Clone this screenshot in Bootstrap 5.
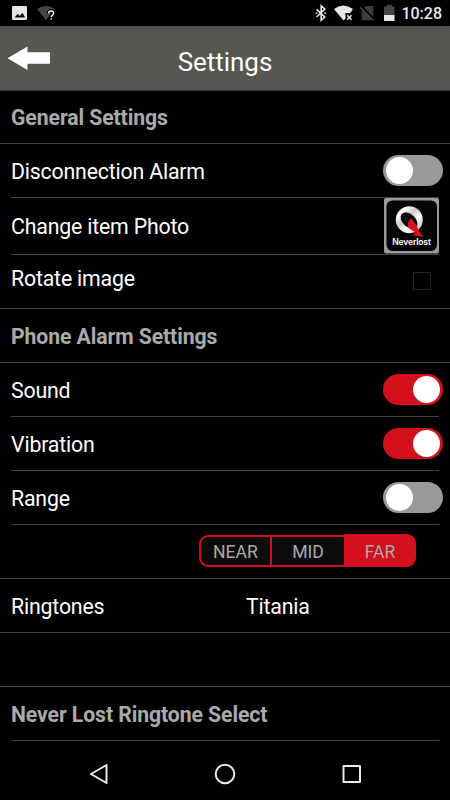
<!DOCTYPE html>
<html lang="en">
<head>
<meta charset="utf-8">
<meta name="viewport" content="width=device-width, initial-scale=1">
<title>Settings</title>
<link href="https://cdn.jsdelivr.net/npm/bootstrap@5.3.0/dist/css/bootstrap.min.css" rel="stylesheet">
<style>
body{font-family:Roboto,sans-serif;background:#000;color:#fff;width:450px;height:800px;overflow:hidden;font-size:21.3px;letter-spacing:-.18px;line-height:26px}
.status{height:26px;font-size:16px;letter-spacing:0;font-weight:500;color:#e8e8e8}
.clock{padding-top:2px}
.titlebar{height:64px;background:linear-gradient(#4c4b47,#575650 12%,#575650)}
.titlebar h1{font-size:26px;font-weight:400;letter-spacing:-.05px;line-height:30px;color:#fff;padding-top:8px}
.line-full{border-bottom:1px solid #444}
.top-line{border-top:1px solid #333}
.opt{height:54px;margin-left:11px;padding-top:2px}
.opt.inset{margin-right:11px;border-bottom:1px solid #444}
.opt.photo{height:57px}
.opt.short{height:53px}
.opt.first{height:52px}
.heading{color:#aaa;font-weight:700;font-size:21.2px;letter-spacing:-.08px}
.switch{width:60px;height:31px;border-radius:16px;background:#999;padding:2px 3px;margin:-2px -4px 0 0}
.switch i{display:block;width:27px;height:27px;border-radius:50%;background:#fff}
.switch.on{background:#d20f1c}
.range-row{height:53px;padding-bottom:2px}
.seg{width:217px;height:33px;margin-right:34px;font-size:17.6px;letter-spacing:0;color:#aaa}
.seg div{height:32px;background:#0c0c0c;border:2px solid #d20f1c;line-height:20px;padding-top:2px}
.seg .near{width:72px;border-radius:9px 0 0 9px;border-right-width:1px}
.seg .mid{width:73px;border-left-width:1px;border-right:0}
.seg .far{width:72px;height:33px;background:#d20f1c;border-radius:0 9px 9px 0}
.box{width:18px;height:18px;border:1px solid #242424;margin:-3px 11px 0 0}
.ring{width:235px}
.thumb{margin-top:-2px}
</style>
<script src="https://cdn.jsdelivr.net/npm/bootstrap@5.3.0/dist/js/bootstrap.bundle.min.js"></script>
</head>
<body>
<div class="status d-flex align-items-center justify-content-between">
  <svg width="70" height="26" viewBox="0 0 70 26">
    <rect x="12" y="6" width="15" height="14" rx="1.2" fill="#e8e8e8"/>
    <path d="M14.500 17.500l3.300-3.800 2 2.200 2.500-3.200 3 4.800z" fill="#111"/>
    <path d="M37 9q9-6 18 0l-9 11z" fill="#454545"/>
    <path d="M48.800 13.500q0-2.400 2.400-2.400t2.400 2.200q0 1.200-1.300 2-1.100.8-1.100 1.800M51.200 18v1.800" stroke="#000" stroke-width="4" fill="none"/>
    <path d="M48.800 13.500q0-2.400 2.400-2.400t2.400 2.200q0 1.200-1.300 2-1.100.8-1.100 1.800M51.200 18.200v1.600" stroke="#eee" stroke-width="1.500" fill="none"/>
  </svg>
  <div class="d-flex align-items-center">
  <svg width="90" height="26" viewBox="311 0 90 26">
    <path d="M316.600 9.300l8.200 7.700-3.600 3.200V5.800l3.600 3.200-8.200 8" stroke="#e8e8e8" stroke-width="1.600" fill="none"/>
    <path d="M315.800 13.200h1.600M324.500 13.200h1.600" stroke="#ddd" stroke-width="1.600"/>
    <path d="M334 9q9.300-7 19 0l-2.800 4h-4.700v5.500l-2 2z" fill="#e8e8e8"/>
    <path d="M347.200 15.200l4.300 4.600m0-4.600l-4.300 4.600" stroke="#e8e8e8" stroke-width="1.500"/>
    <path d="M366 6h6q1.300 0 1.300 1.300V19q0 1.200-1.300 1.200h-10.300V10.500z" fill="#3c3c3c"/>
    <path d="M361 6.500l14 14" stroke="#000" stroke-width="2.500"/>
    <path d="M360.200 7.500l13.300 13" stroke="#4a4a4a" stroke-width="1.200"/>
    <path d="M387 5h5v1.500h2.500V15h-10.500V6.500h3z" fill="#454545"/>
    <path d="M384 15h10.500v6H384z" fill="#e8e8e8"/>
  </svg>
  <span class="pe-2 clock">10:28</span>
  </div>
</div>
<header class="titlebar d-flex align-items-center justify-content-center position-relative">
  <svg class="position-absolute start-0 top-0" width="60" height="64" viewBox="0 26 60 64"><path d="M7.500 58.200L27.500 46.500v5.800H50v11.500H27.500V70z" fill="#fff"/></svg>
  <h1 class="mb-0">Settings</h1>
</header>
<main>
  <section class="line-full top-line"><div class="opt first heading d-flex align-items-center">General Settings</div></section>
  <section class="line-full">
    <div class="opt inset d-flex align-items-center justify-content-between">Disconnection Alarm<div class="switch"><i></i></div></div>
    <div class="opt inset photo d-flex align-items-center justify-content-between">Change item Photo
      <svg class="thumb" width="55" height="56" viewBox="0 0 55 56">
        <rect y="0" width="55" height="55.500" rx="2" fill="#999"/><rect x="2.500" y="2.500" width="50.500" height="50.500" rx="6" fill="#050505"/>
        <defs><linearGradient id="silver" x2="1" y2="1"><stop stop-color="#aaa"/><stop offset=".2" stop-color="#fff"/><stop offset=".42" stop-color="#ccc"/><stop offset=".62" stop-color="#fff"/><stop offset="1" stop-color="#aaa"/></linearGradient></defs>
        <circle cx="25.300" cy="21.700" r="13.500" fill="url(#silver)"/>
        <ellipse cx="25" cy="22.500" rx="9.800" ry="6.300" transform="rotate(42 25 22.500)" fill="#080808"/>
        <path d="M27 20l6.500 8.500q-.3 3.500 6 10L28.500 37.500l3-3-7-4.500q-2-5 2.500-10" fill="#d9101d"/>
        <text x="27.500" y="47.300" text-anchor="middle" textLength="38.500" lengthAdjust="spacingAndGlyphs" font-family="Inter,sans-serif" font-weight="600" font-size="8.400" fill="#fff">Neverlost</text>
      </svg></div>
    <div class="opt short d-flex align-items-center justify-content-between me-2"><span class="pb-1 mb-1">Rotate image</span><div class="box"></div></div>
  </section>
  <section class="line-full"><div class="opt short heading d-flex align-items-center">Phone Alarm Settings</div></section>
  <section class="line-full">
    <div class="opt inset d-flex align-items-center justify-content-between">Sound<div class="switch on d-flex justify-content-end"><i></i></div></div>
    <div class="opt inset d-flex align-items-center justify-content-between">Vibration<div class="switch on d-flex justify-content-end"><i></i></div></div>
    <div class="opt inset d-flex align-items-center justify-content-between">Range<div class="switch"><i></i></div></div>
    <div class="range-row d-flex align-items-center justify-content-end"><div class="seg d-flex align-items-center text-center"><div class="near d-flex align-items-center justify-content-center">NEAR</div><div class="mid d-flex align-items-center justify-content-center">MID</div><div class="far d-flex align-items-center justify-content-center">FAR</div></div></div>
  </section>
  <section class="line-full"><div class="opt short d-flex align-items-center"><span class="ring">Ringtones</span><span>Titania</span></div></section>
  <section class="line-full opt ms-0"></section>
  <section><div class="opt inset heading d-flex align-items-center">Never Lost Ringtone Select</div></section>
</main>
<nav>
  <svg class="d-block" width="450" height="59" viewBox="0 741 450 59" fill="none" stroke="#e8e8e8" stroke-width="2" stroke-linejoin="round">
    <path d="M106.500 765v18L91 774z"/><circle cx="225" cy="774" r="9.300"/><rect x="343.500" y="766" width="16.500" height="16"/>
  </svg>
</nav>
</body>
</html>
